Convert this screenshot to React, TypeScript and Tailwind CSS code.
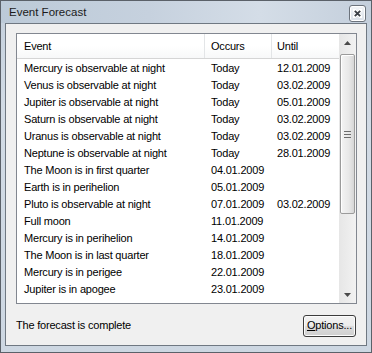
import React from "react";

const ROWS: [string, string, string][] = [
  ["Mercury is observable at night", "Today", "12.01.2009"],
  ["Venus is observable at night", "Today", "03.02.2009"],
  ["Jupiter is observable at night", "Today", "05.01.2009"],
  ["Saturn is observable at night", "Today", "03.02.2009"],
  ["Uranus is observable at night", "Today", "03.02.2009"],
  ["Neptune is observable at night", "Today", "28.01.2009"],
  ["The Moon is in first quarter", "04.01.2009", ""],
  ["Earth is in perihelion", "05.01.2009", ""],
  ["Pluto is observable at night", "07.01.2009", "03.02.2009"],
  ["Full moon", "11.01.2009", ""],
  ["Mercury is in perihelion", "14.01.2009", ""],
  ["The Moon is in last quarter", "18.01.2009", ""],
  ["Mercury is in perigee", "22.01.2009", ""],
  ["Jupiter is in apogee", "23.01.2009", ""],
];

function Arrow({ down = false }: { down?: boolean }) {
  return (
    <svg width="7" height="4" viewBox="0 0 7 4" className={down ? "rotate-180" : ""}>
      <path d="M3.5 0 L7 4 L0 4 Z" fill="#4a4a4a" />
    </svg>
  );
}

function Scrollbar() {
  return (
    <div className="w-[17px] flex flex-col bg-[linear-gradient(to_right,#e6e6e6,#f2f2f2)]">
      <div className="h-[17px] flex items-center justify-center">
        <Arrow />
      </div>
      {/* thumb */}
      <div className="mt-[3px] mx-[1px] h-[160px] rounded-[2px] border border-[#9b9b9b] bg-[linear-gradient(to_right,#f4f4f4,#e8e8e8_60%,#d6d6d6)] flex flex-col items-center justify-center gap-[2px] shadow-[inset_1px_1px_0_#ffffff]">
        <div className="w-[7px] h-[1px] bg-[#6d6d6d]" />
        <div className="w-[7px] h-[1px] bg-[#6d6d6d]" />
        <div className="w-[7px] h-[1px] bg-[#6d6d6d]" />
      </div>
      <div className="flex-1" />
      <div className="h-[17px] flex items-center justify-center">
        <Arrow down />
      </div>
    </div>
  );
}

export default function App() {
  return (
    <div className="w-[372px] h-[353px] flex flex-col border border-[#5b6169] bg-[linear-gradient(to_bottom,#c3cfdc,#d2dbe5_30%,#cdd7e2)] font-['Liberation_Sans',Arial,sans-serif] text-black select-none">
      {/* title bar */}
      <div className="h-[22px] flex items-start justify-between pl-[8px] pr-[5px] bg-[linear-gradient(to_right,#bccad8,#c6d1de_40%,#d4dde7_70%,#c4cfdc)]">
        <span className="mt-[4px] text-[11.5px] leading-[14px] text-[#1b1b1b]">Event Forecast</span>
        <div className="mt-[4px] w-[17px] h-[17px] rounded-[3px] border border-[#6c737c] bg-[linear-gradient(to_bottom,#f4f6f9,#d9e0e8)] flex items-center justify-center shadow-[inset_0_0_0_1px_#ffffff]">
          <svg width="9" height="9" viewBox="0 0 9 9">
            <path d="M1.5 1.5 L7.5 7.5 M7.5 1.5 L1.5 7.5" stroke="#ffffff" strokeWidth="3.6" strokeLinecap="square" />
            <path d="M1.8 1.8 L7.2 7.2 M7.2 1.8 L1.8 7.2" stroke="#3a3f46" strokeWidth="1.9" />
          </svg>
        </div>
      </div>

      {/* client area */}
      <div className="mx-[4px] mb-[6px] flex-1 border border-[#6f7882] bg-[#f0f0f0] flex flex-col text-[11px] tracking-[-0.2px]">
        <div className="mt-[9px] ml-[10px] mr-[9px] h-[271px] border border-[#828790] bg-white flex overflow-hidden">
          <div className="flex-1 flex flex-col">
            {/* header */}
            <div className="h-[25px] shrink-0 flex border-b border-[#d5d5d5] bg-[linear-gradient(to_bottom,#ffffff,#ffffff_50%,#f7f8f9)]">
              <div className="w-[188px] pl-[7px] pt-[1px] flex items-center border-r border-[#e3e5e7]">Event</div>
              <div className="w-[67px] pl-[6px] pt-[1px] flex items-center border-r border-[#e3e5e7]">Occurs</div>
              <div className="flex-1 pl-[5px] pt-[1px] flex items-center">Until</div>
            </div>
            {/* rows */}
            <div className="pt-[1px] flex flex-col">
              {ROWS.map(([event, occurs, until]) => (
                <div key={event} className="h-[17px] flex items-center leading-[17px] whitespace-nowrap">
                  <div className="w-[188px] pl-[7px]">{event}</div>
                  <div className="w-[67px] pl-[6px]">{occurs}</div>
                  <div className="flex-1 pl-[5px]">{until}</div>
                </div>
              ))}
            </div>
          </div>
          <Scrollbar />
        </div>

        {/* status line */}
        <div className="flex-1 flex items-center justify-between pl-[10px] pr-[10px] pt-[2px]">
          <span>The forecast is complete</span>
          <button className="w-[53px] h-[22px] rounded-[3px] border border-[#3c3c3c] bg-[linear-gradient(to_bottom,#f2f2f2,#ebebeb_50%,#dddddd_51%,#cfcfcf)] shadow-[inset_0_0_0_1px_#fcfcfc] text-[11px] flex items-center justify-center">
            <span><span className="underline">O</span>ptions...</span>
          </button>
        </div>
      </div>
    </div>
  );
}
